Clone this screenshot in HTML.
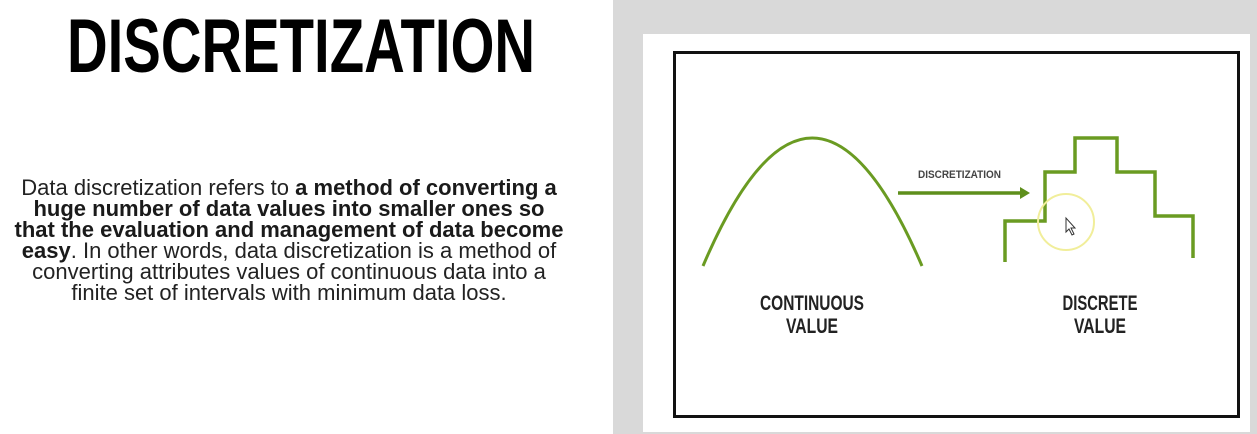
<!DOCTYPE html>
<html><head><meta charset="utf-8"><style>
html,body{margin:0;padding:0;width:1257px;height:434px;overflow:hidden;background:#fff;font-family:"Liberation Sans",sans-serif;}
.p{position:absolute;left:0;width:578px;top:177px;text-align:center;font-size:22px;line-height:21px;color:#222;white-space:nowrap;}
.p b{color:#1a1a1a}
</style></head><body>
<svg width="1257" height="434" style="position:absolute;left:0;top:0">
<text x="67" y="72" font-family="Liberation Sans Narrow, Liberation Sans, sans-serif" font-weight="bold" font-size="76" textLength="468" lengthAdjust="spacingAndGlyphs" fill="#000">DISCRETIZATION</text>
<rect x="613" y="0" width="644" height="434" fill="#d9d9d9"/>
<rect x="643" y="34" width="607" height="398" fill="#fff"/>
<rect x="674.5" y="52.5" width="564" height="364" fill="none" stroke="#111" stroke-width="3"/>
<path d="M703 266 Q812 10 922 266" fill="none" stroke="#6a9b22" stroke-width="3"/>
<path d="M1005 262 V221 H1045 V172 H1075 V138 H1117 V172 H1155 V216 H1193 V258" fill="none" stroke="#6a9b22" stroke-width="3.5"/>
<line x1="898" y1="193" x2="1022" y2="193" stroke="#5e8f1c" stroke-width="3.5"/>
<path d="M1020 187 L1030 193 L1020 199 Z" fill="#5e8f1c"/>
<text x="918" y="178" font-family="Liberation Sans Narrow, Liberation Sans, sans-serif" font-weight="bold" font-size="11" textLength="83" lengthAdjust="spacingAndGlyphs" fill="#444">DISCRETIZATION</text>
<g font-family="Liberation Sans Narrow, Liberation Sans, sans-serif" font-weight="bold" font-size="21" fill="#222" text-anchor="middle">
<text x="812" y="310" textLength="104" lengthAdjust="spacingAndGlyphs">CONTINUOUS</text>
<text x="812" y="333" textLength="52" lengthAdjust="spacingAndGlyphs">VALUE</text>
<text x="1100" y="310" textLength="75" lengthAdjust="spacingAndGlyphs">DISCRETE</text>
<text x="1100" y="333" textLength="52" lengthAdjust="spacingAndGlyphs">VALUE</text>
</g>
<circle cx="1066" cy="222" r="28" fill="none" stroke="#f1ee9a" stroke-width="2"/>
<path d="M1066 218 L1066 232 L1069 229 L1072 235 L1074 234 L1071 228 L1075 228 Z" fill="#fff" stroke="#333" stroke-width="1"/>
</svg>
<div class="p">Data discretization refers to <b>a method of converting a</b><br><b>huge number of data values into smaller ones so</b><br><b>that the evaluation and management of data become</b><br><b>easy</b>. In other words, data discretization is a method of<br>converting attributes values of continuous data into a<br>finite set of intervals with minimum data loss.</div>
</body></html>
